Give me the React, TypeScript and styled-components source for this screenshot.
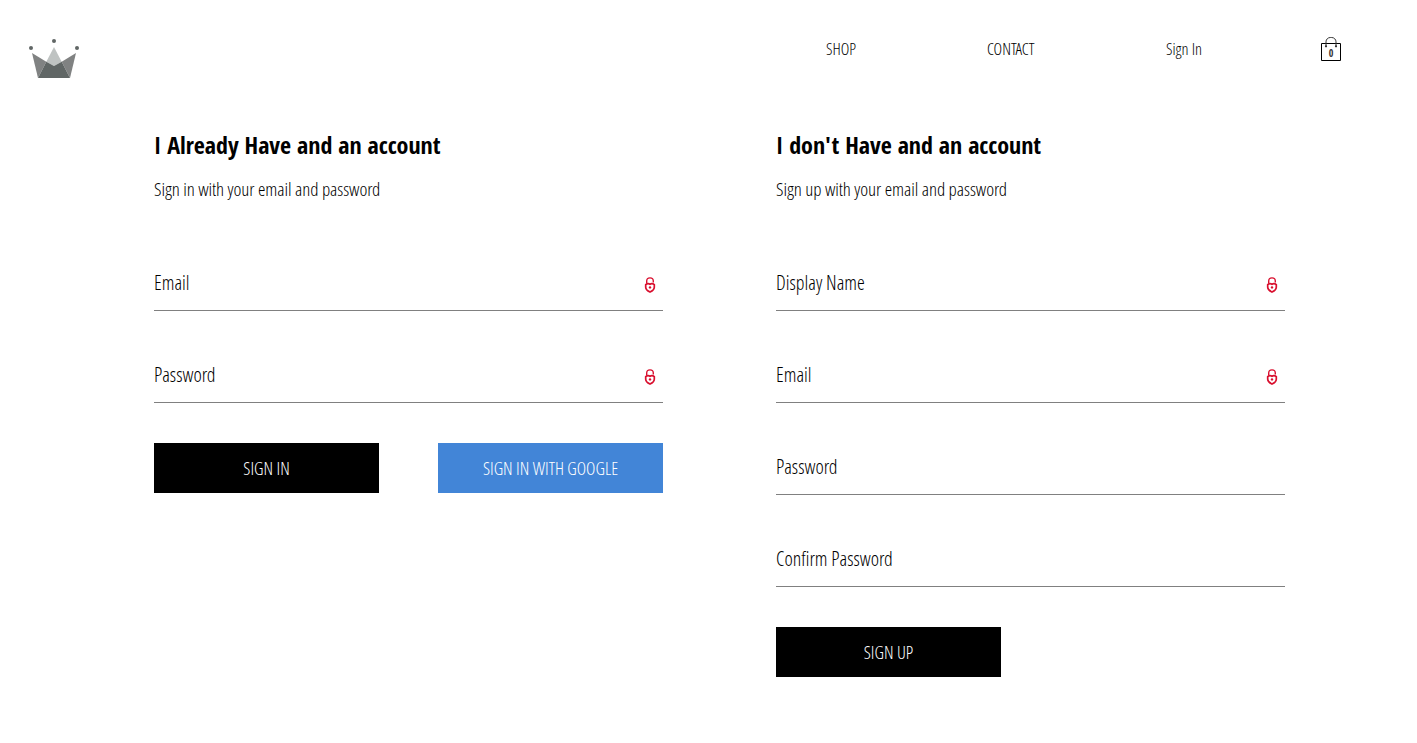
import React from 'react';
import styled, { createGlobalStyle } from 'styled-components';

const GlobalStyle = createGlobalStyle`
  * { box-sizing: border-box; }
  body {
    margin: 0;
    background: #fff;
    color: #000;
    font-family: 'Open Sans Condensed Light', 'Open Sans', sans-serif;
    font-stretch: 75%;
    font-weight: 300;
  }
`;

const Page = styled.div`
  padding: 20px 60px 0 28px;
`;

const Header = styled.header`
  height: 70px;
  display: flex;
  justify-content: space-between;
  align-items: flex-start;
`;

const Logo = styled.a`
  display: block;
  padding-top: 18px;
  line-height: 0;
`;

const Nav = styled.nav`
  display: flex;
  padding: 16px 14px 0 0;
`;

const NavLink = styled.a<{ $width: number }>`
  width: ${(p) => p.$width}px;
  font-size: 16.5px;
  line-height: 26px;
  white-space: nowrap;
`;

const Cart = styled.div`
  position: relative;
  width: 24px;
  height: 26px;
`;

const Count = styled.span`
  position: absolute;
  left: 0;
  width: 100%;
  top: 10px;
  text-align: center;
  font-family: 'Open Sans Condensed', 'Open Sans', sans-serif;
  font-size: 10px;
  line-height: 14px;
  font-weight: 700;
  color: #333;
`;

const Main = styled.main`
  display: flex;
  justify-content: space-between;
  width: 1131px;
  margin: 38px 0 0 126px;
`;

const Panel = styled.section`
  width: 509px;
  display: flex;
  flex-direction: column;
`;

const Title = styled.h2`
  margin: 0;
  font-family: 'Open Sans Condensed', 'Open Sans', sans-serif;
  font-size: 24px;
  line-height: 33px;
  font-weight: 700;
`;

const Hint = styled.p`
  margin: 16px 0 0;
  font-size: 19px;
  letter-spacing: -0.08px;
  line-height: 25px;
`;

const Field = styled.label`
  display: flex;
  justify-content: space-between;
  height: 47px;
  margin-top: 45px;
  border-bottom: 1px solid #808080;
  padding: 5px 7px 0 0;
  font-size: 20px;
  line-height: 27px;
`;

const Fields = styled.div`
  padding-top: 17px;
`;

const Actions = styled.div`
  display: flex;
  justify-content: space-between;
  margin-top: 40px;
`;

const Button = styled.button<{ $google?: boolean }>`
  width: 225px;
  height: 50px;
  border: 0;
  padding: 0;
  background: ${(p) => (p.$google ? '#4285d7' : '#000')};
  color: #fff;
  font: inherit;
  font-size: 18px;
  line-height: 50px;
`;

const LockSvg = styled.svg`
  display: block;
  margin-top: 8px;
`;

const Lock = () => (
  <LockSvg width="12" height="17" viewBox="0 0 12 17" fill="none" stroke="#d9102f">
    <path d="M2.7 6.5V4a3.3 3.1 0 0 1 6.6 0v1.4" strokeWidth="1.4" />
    <path d="M1.7 7.6Q3.8 5.8 6 7.2 8.2 5.8 10.3 7.6v2.6Q10.3 13 6 15 1.7 13 1.7 10.2z" strokeWidth="1.7" />
    <circle cx="6" cy="10.4" r="1.2" fill="#d9102f" stroke="none" />
  </LockSvg>
);

const Crown = () => (
  <svg width="52" height="41" viewBox="0 0 52 41">
    <path d="M26 9 18.3 23.7 26 28 33.7 23.7z" fill="#bfc3c2" />
    <path d="M4 15 18.3 23.7 10 40z" fill="#808282" />
    <path d="M48 15 33.7 23.7 42 40z" fill="#808282" />
    <path d="M10 40 18.3 23.7 26 28 33.7 23.7 42 40z" fill="#606665" />
    <circle cx="3" cy="10" r="2" fill="#606665" />
    <circle cx="26" cy="3" r="2" fill="#606665" />
    <circle cx="49" cy="10" r="2" fill="#606665" />
  </svg>
);

const Bag = () => (
  <svg width="24" height="26" viewBox="0 0 24 26" fill="none" stroke="#000">
    <path d="M2.5 7.5h19v17h-19z" />
    <path d="M7 11V5.8a4.3 4.3 0 0 1 4.3-4.3h1.4A4.3 4.3 0 0 1 17 5.8V11" stroke="#333" />
    <circle cx="7" cy="10.3" r="1.1" fill="#333" stroke="none" />
    <circle cx="17" cy="10.3" r="1.1" fill="#333" stroke="none" />
  </svg>
);

type FieldDef = { label: string; locked?: boolean };

const FieldList = ({ items }: { items: FieldDef[] }) => (
  <Fields>
    {items.map((f) => (
      <Field key={f.label}>
        <span>{f.label}</span>
        {f.locked && <Lock />}
      </Field>
    ))}
  </Fields>
);

export default function App() {
  return (
    <Page>
      <GlobalStyle />
      <Header>
        <Logo><Crown /></Logo>
        <Nav>
          <NavLink $width={161}>SHOP</NavLink>
          <NavLink $width={179}>CONTACT</NavLink>
          <NavLink $width={153}>Sign In</NavLink>
          <Cart><Bag /><Count>0</Count></Cart>
        </Nav>
      </Header>
      <Main>
        <Panel>
          <Title>I Already Have and an account</Title>
          <Hint>Sign in with your email and password</Hint>
          <FieldList items={[{ label: 'Email', locked: true }, { label: 'Password', locked: true }]} />
          <Actions>
            <Button>SIGN IN</Button>
            <Button $google>SIGN IN WITH GOOGLE</Button>
          </Actions>
        </Panel>
        <Panel>
          <Title>I don't Have and an account</Title>
          <Hint>Sign up with your email and password</Hint>
          <FieldList
            items={[
              { label: 'Display Name', locked: true },
              { label: 'Email', locked: true },
              { label: 'Password' },
              { label: 'Confirm Password' },
            ]}
          />
          <Actions>
            <Button>SIGN UP</Button>
          </Actions>
        </Panel>
      </Main>
    </Page>
  );
}
